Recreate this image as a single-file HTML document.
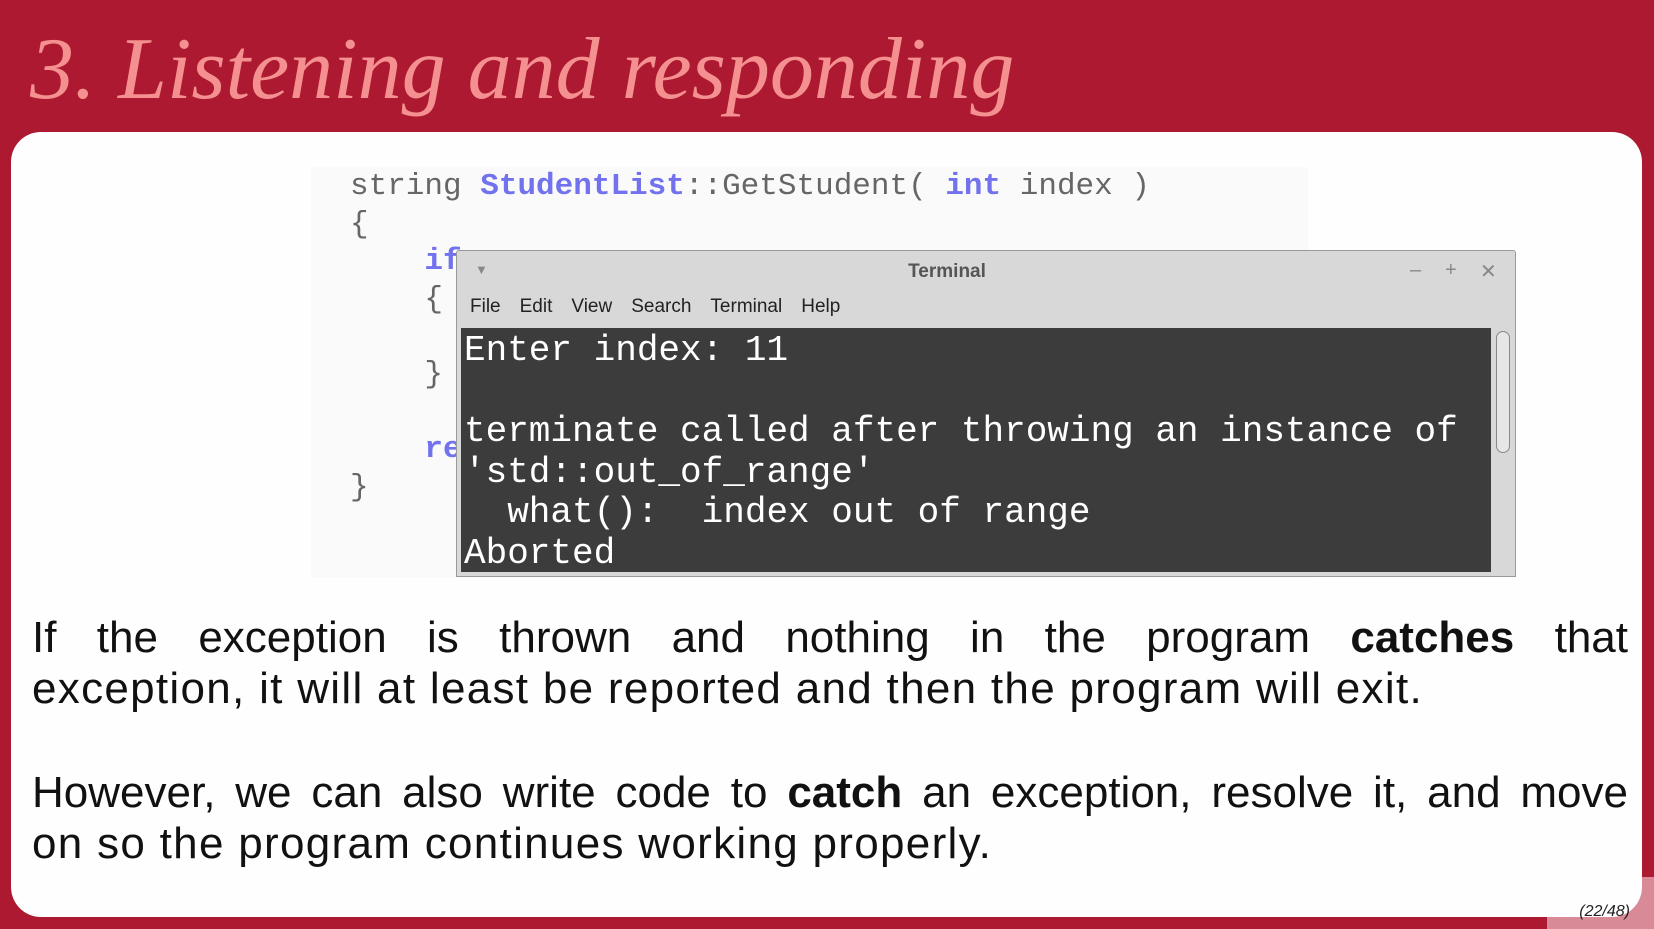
<!DOCTYPE html>
<html><head><meta charset="utf-8"><style>
html,body{margin:0;padding:0;}
body{width:1654px;height:929px;background:#ac1931;position:relative;overflow:hidden;font-family:"Liberation Sans",sans-serif;}
.title{position:absolute;left:30px;font-family:"Liberation Serif",serif;font-style:italic;font-size:88px;color:#f59090;line-height:1;top:26px;white-space:nowrap;}
.card{position:absolute;left:11px;top:132px;width:1631px;height:785px;background:#fefefe;border-radius:30px;}
.pink{position:absolute;left:1547px;top:877px;width:107px;height:52px;background:#d98a97;}
.pg{position:absolute;right:24px;top:903px;font-size:16px;font-style:italic;color:#222;}
.codebg{position:absolute;left:311px;top:167px;width:997px;height:411px;background:#fafafa;}
.code{position:absolute;left:350px;top:168px;font-family:"Liberation Mono",monospace;font-size:31px;line-height:37.6px;color:#666;white-space:pre;}
.k{color:#7272ee;font-weight:bold;}
.term{position:absolute;left:456px;top:250px;width:1058px;height:325px;background:#d8d8d8;border:1px solid #999;border-radius:3px 3px 0 0;}
.tt{position:absolute;left:0;width:980px;top:10px;text-align:center;font-size:19px;font-weight:bold;color:#555;}
.menu{position:absolute;left:13px;top:45px;font-size:19px;color:#222;}
.menu span{margin-right:19px;}
.dark{position:absolute;left:4px;top:77px;width:1030px;height:244px;background:#3c3c3c;}
.tx{position:absolute;left:3px;top:3px;font-family:"Liberation Mono",monospace;font-size:36px;line-height:40.5px;color:#fff;white-space:pre;}
.sb{position:absolute;left:1039px;top:80px;width:12px;height:120px;border:1px solid #888;border-radius:7px;background:#e6e6e6;}
.wb{position:absolute;top:8px;font-size:20px;color:#888;}
.p{position:absolute;left:32px;width:1596px;font-size:44px;line-height:51px;color:#111;white-space:nowrap;}
.j{text-align:justify;text-align-last:justify;}
</style></head><body>
<div class="title">3. Listening and responding</div>
<div class="pink"></div>
<div class="card"></div>
<div class="pg">(22/48)</div>
<div class="codebg"></div>
<div class="code">string <span class="k">StudentList</span>::GetStudent( <span class="k">int</span> index )
{
    <span class="k">if</span>
    {

    }

    <span class="k">re</span>
}</div>
<div class="term">
<div class="wb" style="left:18px;font-size:13px;top:11px">▼</div>
<div class="tt">Terminal</div>
<div class="wb" style="left:953px">–</div><div class="wb" style="left:988px">+</div><div class="wb" style="left:1023px">✕</div>
<div class="menu"><span>File</span><span>Edit</span><span>View</span><span>Search</span><span>Terminal</span><span>Help</span></div>
<div class="dark"><div class="tx">Enter index: 11

terminate called after throwing an instance of
'std::out_of_range'
  what():  index out of range
Aborted</div></div>
<div class="sb"></div>
</div>
<div class="p j" style="top:612px">If the exception is thrown and nothing in the program <b>catches</b> that</div>
<div class="p" style="top:663px;letter-spacing:1.3px">exception, it will at least be reported and then the program will exit.</div>
<div class="p j" style="top:767px">However, we can also write code to <b>catch</b> an exception, resolve it, and move</div>
<div class="p" style="top:818px;letter-spacing:1.3px">on so the program continues working properly.</div>
</body></html>
